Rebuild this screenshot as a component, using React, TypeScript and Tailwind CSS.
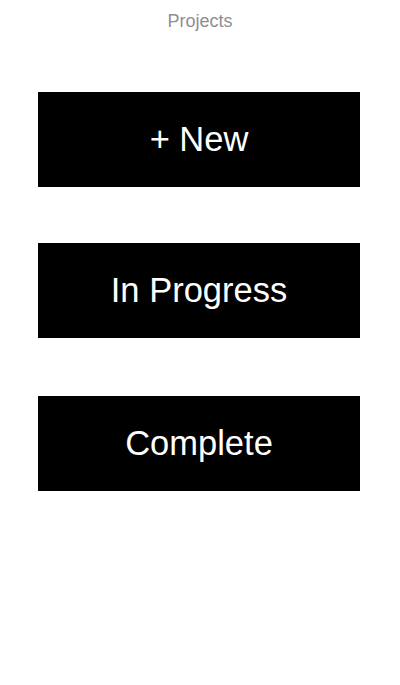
const font = { fontFamily: '"Liberation Sans", Arial, sans-serif' };

function ProjectButton({ label, className }: { label: string; className: string }) {
  return (
    <button
      type="button"
      className={`ml-[38px] flex h-[95px] w-[322px] items-center justify-center bg-black text-[34.5px] leading-none text-white ${className}`}
    >
      {label}
    </button>
  );
}

export default function App() {
  return (
    <div className="flex min-h-[685px] w-[400px] flex-col bg-white" style={font}>
      {/* Header */}
      <h1 className="pt-[10px] text-center text-[18px] leading-[22px] font-normal text-[#8e8e93]">
        Projects
      </h1>

      {/* Actions */}
      <ProjectButton label="+ New" className="mt-[60px]" />
      <ProjectButton label="In Progress" className="mt-[56px]" />
      <ProjectButton label="Complete" className="mt-[58px]" />
    </div>
  );
}
